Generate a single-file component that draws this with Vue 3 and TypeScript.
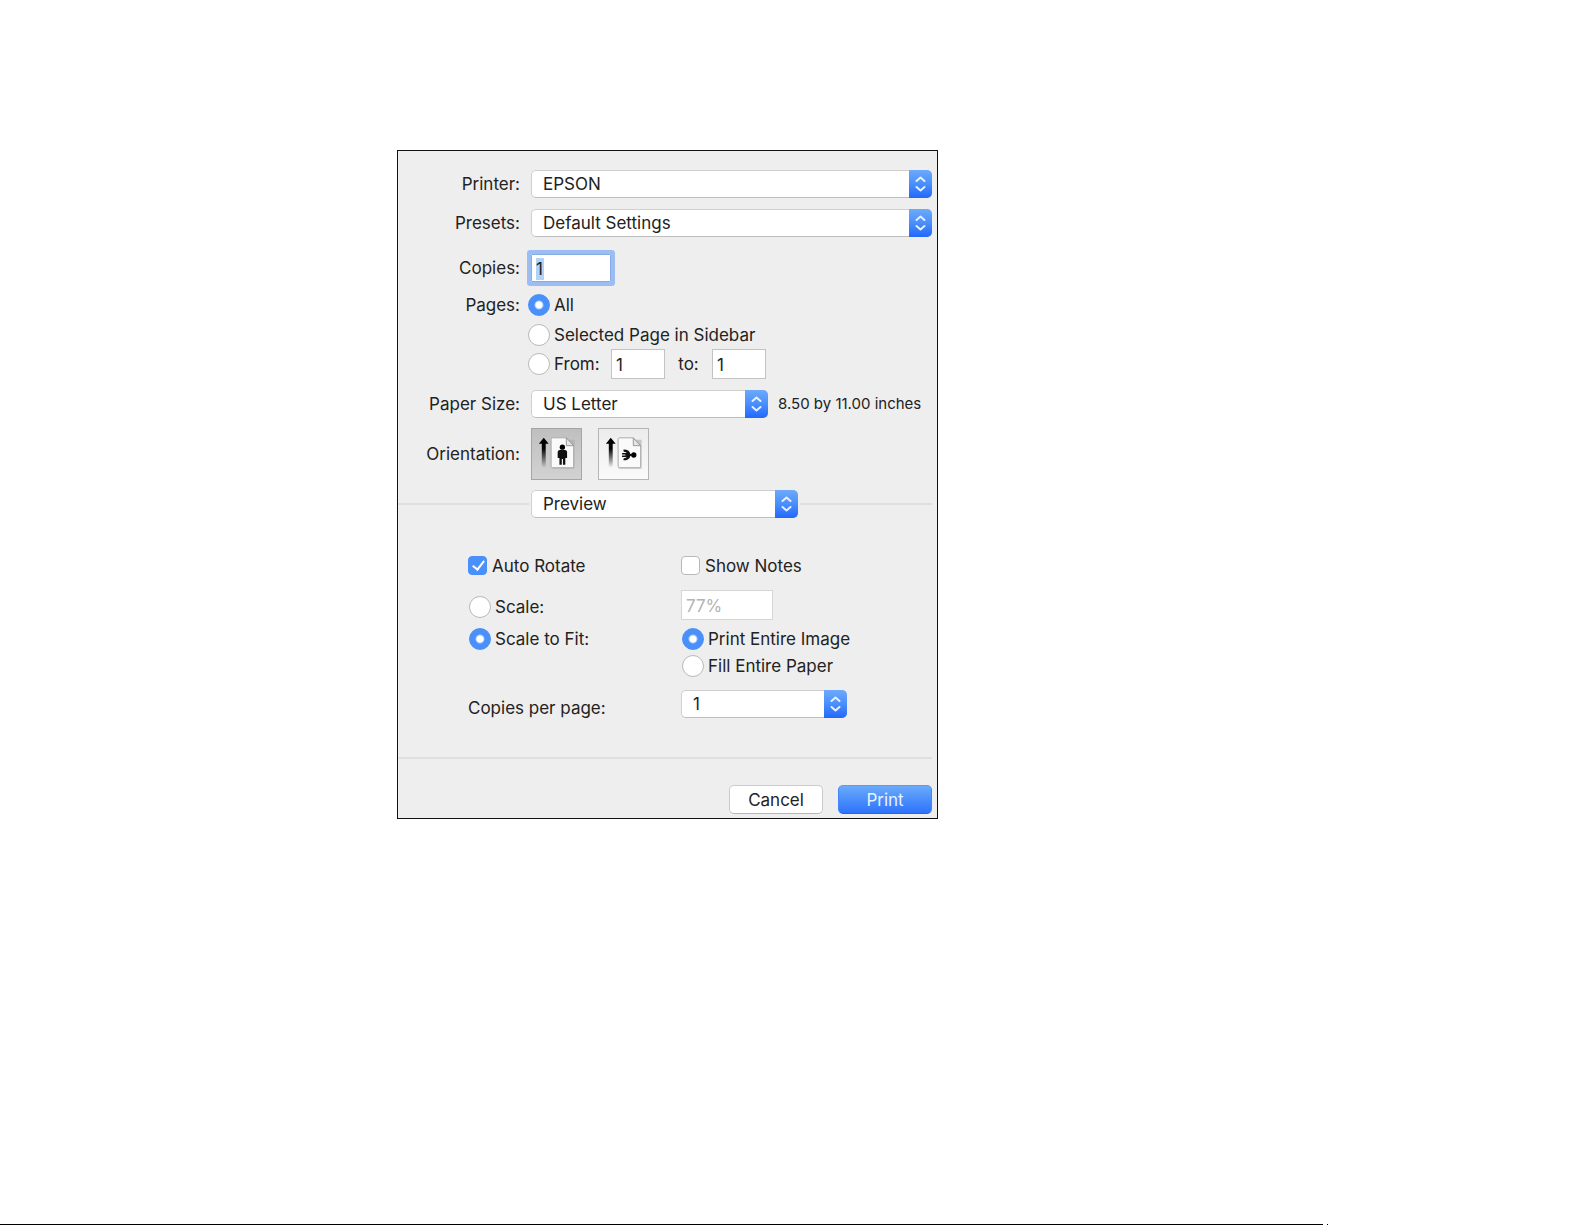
<script setup lang="ts">
import { ref } from 'vue'

const printer = ref('EPSON')
const preset = ref('Default Settings')
const copies = ref('1')
const pages = ref('all')
const fromPage = ref('1')
const toPage = ref('1')
const paper = ref('US Letter')
const orientation = ref('portrait')
const section = ref('Preview')
const autoRotate = ref(true)
const showNotes = ref(false)
const scaleMode = ref('fit')
const scale = ref('77%')
const fitMode = ref('entire')
const perPage = ref('1')
</script>

<template>
  <div class="page">
    <svg width="0" height="0" class="defs" aria-hidden="true">
      <defs>
        <linearGradient id="stem" x1="0" y1="0" x2="0" y2="1">
          <stop offset="0.35" stop-color="#000" />
          <stop offset="1" stop-color="#000" stop-opacity="0" />
        </linearGradient>
        <symbol id="updown" viewBox="0 0 23 28">
          <path d="M7.500 11 11.500 7.500 15.500 11M7.500 17 11.500 20.500 15.500 17" fill="none" stroke="#e6f0ff" stroke-width="2" stroke-linecap="round" stroke-linejoin="round" />
        </symbol>
        <symbol id="sheet" viewBox="0 0 50 50">
          <path d="M12 8.500 17 14.500H14V39H10V14.500H7Z" fill="url(#stem)" />
          <path d="M20 10.500H43.500V40H20Z" fill="#aaa" opacity=".6" />
          <path d="M19.500 10Q19.500 8.500 21 8.500H35L42.500 16.500V37.500Q42.500 39 41 39H21Q19.500 39 19.500 37.500Z" fill="#fafafa" stroke="#aaa" />
          <path d="M35 8.500V16.500H42.500Z" fill="#e4e4e4" stroke="#999" />
        </symbol>
      </defs>
    </svg>

    <form class="panel" @submit.prevent>
      <div class="row">
        <label class="name" for="printer">Printer:</label>
        <div class="popup grow">
          <select id="printer" v-model="printer"><option>EPSON</option></select>
          <span class="cap"><svg><use href="#updown" /></svg></span>
        </div>
      </div>
      <div class="row presets">
        <label class="name" for="presets">Presets:</label>
        <div class="popup grow">
          <select id="presets" v-model="preset"><option>Default Settings</option></select>
          <span class="cap"><svg><use href="#updown" /></svg></span>
        </div>
      </div>
      <div class="row copies">
        <label class="name" for="copies">Copies:</label>
        <div class="focused"><input id="copies" v-model="copies" type="text" /><span class="selection"></span></div>
      </div>

      <div class="row radios all">
        <span class="name">Pages:</span>
        <label class="choice"><input v-model="pages" type="radio" name="pages" value="all" />All</label>
      </div>
      <div class="row radios selected">
        <span class="name"></span>
        <label class="choice"><input v-model="pages" type="radio" name="pages" value="selected" />Selected Page in Sidebar</label>
      </div>
      <div class="row radios range">
        <span class="name"></span>
        <label class="choice from"><input v-model="pages" type="radio" name="pages" value="range" />From:</label>
        <input v-model="fromPage" class="field small" type="text" aria-label="From page" />
        <label class="to" for="to">to:</label>
        <input id="to" v-model="toPage" class="field small" type="text" />
      </div>

      <div class="row paper">
        <label class="name" for="paper">Paper Size:</label>
        <div class="popup paper-popup">
          <select id="paper" v-model="paper"><option>US Letter</option></select>
          <span class="cap"><svg><use href="#updown" /></svg></span>
        </div>
        <span class="dims">8.50 by 11.00 inches</span>
      </div>

      <div class="row orient">
        <span class="name">Orientation:</span>
        <button type="button" class="tile" :class="{ on: orientation === 'portrait' }" aria-label="Portrait" @click="orientation = 'portrait'">
          <svg viewBox="0 0 50 50">
            <use href="#sheet" />
            <circle cx="31" cy="18" r="2.700" />
            <path d="M28 21H34Q35.800 21.300 35.800 23V29H34V36H31.600V30H30.400V36H28V29H26.200V23Q26.200 21.300 28 21Z" fill="#111" />
          </svg>
        </button>
        <button type="button" class="tile second" :class="{ on: orientation === 'landscape' }" aria-label="Landscape" @click="orientation = 'landscape'">
          <svg viewBox="0 0 50 50">
            <use href="#sheet" />
            <circle cx="35.500" cy="26" r="2.700" />
            <path d="M25 20.500Q31 20.500 32 25H34V27H32Q31 31.500 25 31.500V29.500L28 28.500V28H23.500V26.600H27V25.400H23.500V24H28V23.500L25 22.500Z" fill="#111" />
          </svg>
        </button>
      </div>

      <div class="divider">
        <span class="line lead"></span>
        <div class="popup section-popup">
          <select v-model="section" aria-label="Options section"><option>Preview</option></select>
          <span class="cap"><svg><use href="#updown" /></svg></span>
        </div>
        <span class="line grow"></span>
      </div>

      <div class="options">
        <div class="pair boxes">
          <label class="choice tick"><input v-model="autoRotate" type="checkbox" />Auto Rotate</label>
          <label class="choice tick"><input v-model="showNotes" type="checkbox" />Show Notes</label>
        </div>
        <div class="pair scale">
          <label class="choice"><input v-model="scaleMode" type="radio" name="scale" value="scale" />Scale:</label>
          <input v-model="scale" class="field percent" type="text" aria-label="Scale percentage" disabled />
        </div>
        <div class="pair fit">
          <label class="choice"><input v-model="scaleMode" type="radio" name="scale" value="fit" />Scale to Fit:</label>
          <label class="choice"><input v-model="fitMode" type="radio" name="fit" value="entire" />Print Entire Image</label>
        </div>
        <div class="pair fill">
          <span></span>
          <label class="choice"><input v-model="fitMode" type="radio" name="fit" value="fill" />Fill Entire Paper</label>
        </div>
        <div class="pair per-page">
          <label for="per-page">Copies per page:</label>
          <div class="popup per-popup">
            <select id="per-page" v-model="perPage"><option>1</option></select>
            <span class="cap"><svg><use href="#updown" /></svg></span>
          </div>
        </div>
      </div>

      <span class="line"></span>
      <div class="actions">
        <button type="button" class="push">Cancel</button>
        <button type="submit" class="push primary">Print</button>
      </div>
    </form>

    <div class="rule"><span class="bar"></span><span class="dot"></span></div>
  </div>
</template>

<style>
body {
  margin: 0;
  background: #fff;
}
</style>

<style scoped>
* {
  box-sizing: border-box;
}
.page {
  display: flex;
  flex-direction: column;
  min-height: 100vh;
  padding-top: 150px;
  font: 17px/22px Inter, "Liberation Sans", sans-serif;
  color: #222;
}
.defs {
  position: absolute;
}
.panel {
  display: flex;
  flex-direction: column;
  width: 541px;
  max-width: 100%;
  margin-left: 397px;
  padding: 19px 5px 4px 0;
  border: 1px solid #111;
  background: #eee;
}
input,
select,
button {
  margin: 0;
  font: inherit;
  color: inherit;
}
.row,
.divider {
  display: flex;
  align-items: center;
}
.name {
  width: 122px;
  margin-right: 11px;
  text-align: right;
  white-space: nowrap;
}
.radios .name {
  margin-right: 8px;
}
.grow {
  flex: 1;
}
.presets {
  margin-top: 11px;
}
.copies {
  height: 30px;
  margin-top: 16px;
}
.all {
  margin-top: 11px;
}
.selected {
  margin-top: 8px;
}
.range {
  margin-top: 3px;
}
.paper {
  margin-top: 11px;
}
.orient {
  margin-top: 10px;
}
.divider {
  margin-top: 10px;
}

/* Pop-up menus */
.popup {
  position: relative;
  height: 28px;
}
.popup select {
  display: block;
  width: 100%;
  height: 28px;
  padding: 0 28px 0 11px;
  border: 1px solid #d0d0d0;
  border-bottom-color: #bdbdbd;
  border-radius: 5px;
  background: #fff;
  appearance: none;
}
.cap {
  position: absolute;
  top: 0;
  right: 0;
  width: 23px;
  height: 28px;
  border-radius: 0 5px 5px 0;
  background: linear-gradient(#6caafb, #4a8ffb 50%, #2268fb);
  pointer-events: none;
}
.cap svg {
  display: block;
  width: 23px;
  height: 28px;
}
.paper-popup {
  width: 237px;
}
.section-popup {
  width: 267px;
  margin: 0 2px;
}
.per-popup {
  width: 166px;
}
.dims {
  margin-left: 10px;
  font-size: 15px;
  white-space: nowrap;
}

/* Text fields */
.focused {
  position: relative;
  background: #fff;
}
.focused input {
  position: relative;
  z-index: 1;
  display: block;
  width: 80px;
  height: 28px;
  padding: 2px 4px 0;
  border: 1px solid #86ace6;
  border-radius: 1px;
  background: transparent;
  box-shadow: 0 0 0 4px #9bbdf2;
  outline: 0;
}
.selection {
  position: absolute;
  top: 4px;
  left: 5px;
  width: 8px;
  height: 22px;
  background: #b0d3fb;
}
.field {
  height: 30px;
  padding: 2px 4px 0;
  border: 1px solid #c3c3c3;
  border-radius: 0;
  background: #fff;
}
.small {
  width: 54px;
}
.from {
  width: 83px;
}
.to {
  width: 47px;
  text-align: center;
}
.percent {
  width: 92px;
  border-color: #d5d5d5;
  color: #b4b4b4;
}

/* Radios and tick boxes */
.choice {
  display: flex;
  align-items: center;
  gap: 4px;
  height: 22px;
  white-space: nowrap;
}
.choice input {
  flex: none;
  width: 22px;
  height: 22px;
  border: 1px solid #b9b9b9;
  border-radius: 50%;
  background: #fff;
  appearance: none;
}
.choice input:checked {
  border-color: #4a8ff8;
  background: radial-gradient(circle, #fff 3px, #4a90fb 5px);
}
.fit .choice,
.fill .choice,
.scale .choice {
  padding-left: 1px;
}
.tick {
  gap: 5px;
  height: 19px;
}
.tick input {
  width: 19px;
  height: 19px;
  border-radius: 4px;
}
.tick input:checked {
  background: #4a90fb;
}
.tick input:checked::before {
  content: "";
  display: block;
  width: 5px;
  height: 10px;
  margin: 1px 0 0 6px;
  border: solid #fff;
  border-width: 0 2px 2px 0;
  transform: rotate(38deg);
}

/* Orientation tiles */
.tile {
  width: 51px;
  height: 52px;
  padding: 0;
  border: 1px solid #b5b5b5;
  background: linear-gradient(#ececec, #fafafa);
}
.tile.on {
  border-color: #a5a5a5;
  background: linear-gradient(#bfbfbf, #d2d2d2);
}
.tile svg {
  display: block;
  width: 49px;
  height: 50px;
}
.second {
  margin-left: 16px;
}

.line {
  height: 2px;
  background: #dfdfdf;
}
.lead {
  width: 131px;
}

/* Preview options */
.options {
  padding: 38px 0 31px 70px;
}
.pair {
  display: grid;
  grid-template-columns: 213px 1fr;
  align-items: center;
}
.scale {
  height: 34px;
  margin-top: 15px;
}
.percent,
.per-popup {
  align-self: start;
}
.fit {
  margin-top: 4px;
}
.fill {
  margin-top: 5px;
}
.per-page {
  height: 36px;
  margin-top: 13px;
}

.actions {
  display: flex;
  justify-content: flex-end;
  gap: 15px;
  margin-top: 26px;
}
.push {
  width: 94px;
  height: 29px;
  padding: 0;
  border: 1px solid #cbcbcb;
  border-bottom-color: #b5b5b5;
  border-radius: 5px;
  background: #fff;
}
.primary {
  border-color: #5a9bf8 #4286fa #2263f6;
  background: linear-gradient(#6caafb, #4a8ffb 50%, #2f73fc);
  color: #eaf2ff;
}

.rule {
  display: flex;
  gap: 4px;
  margin-top: auto;
}
.bar {
  width: 83.5%;
  height: 1px;
  background: #000;
}
.dot {
  width: 1px;
  height: 1px;
  background: #000;
}
</style>
